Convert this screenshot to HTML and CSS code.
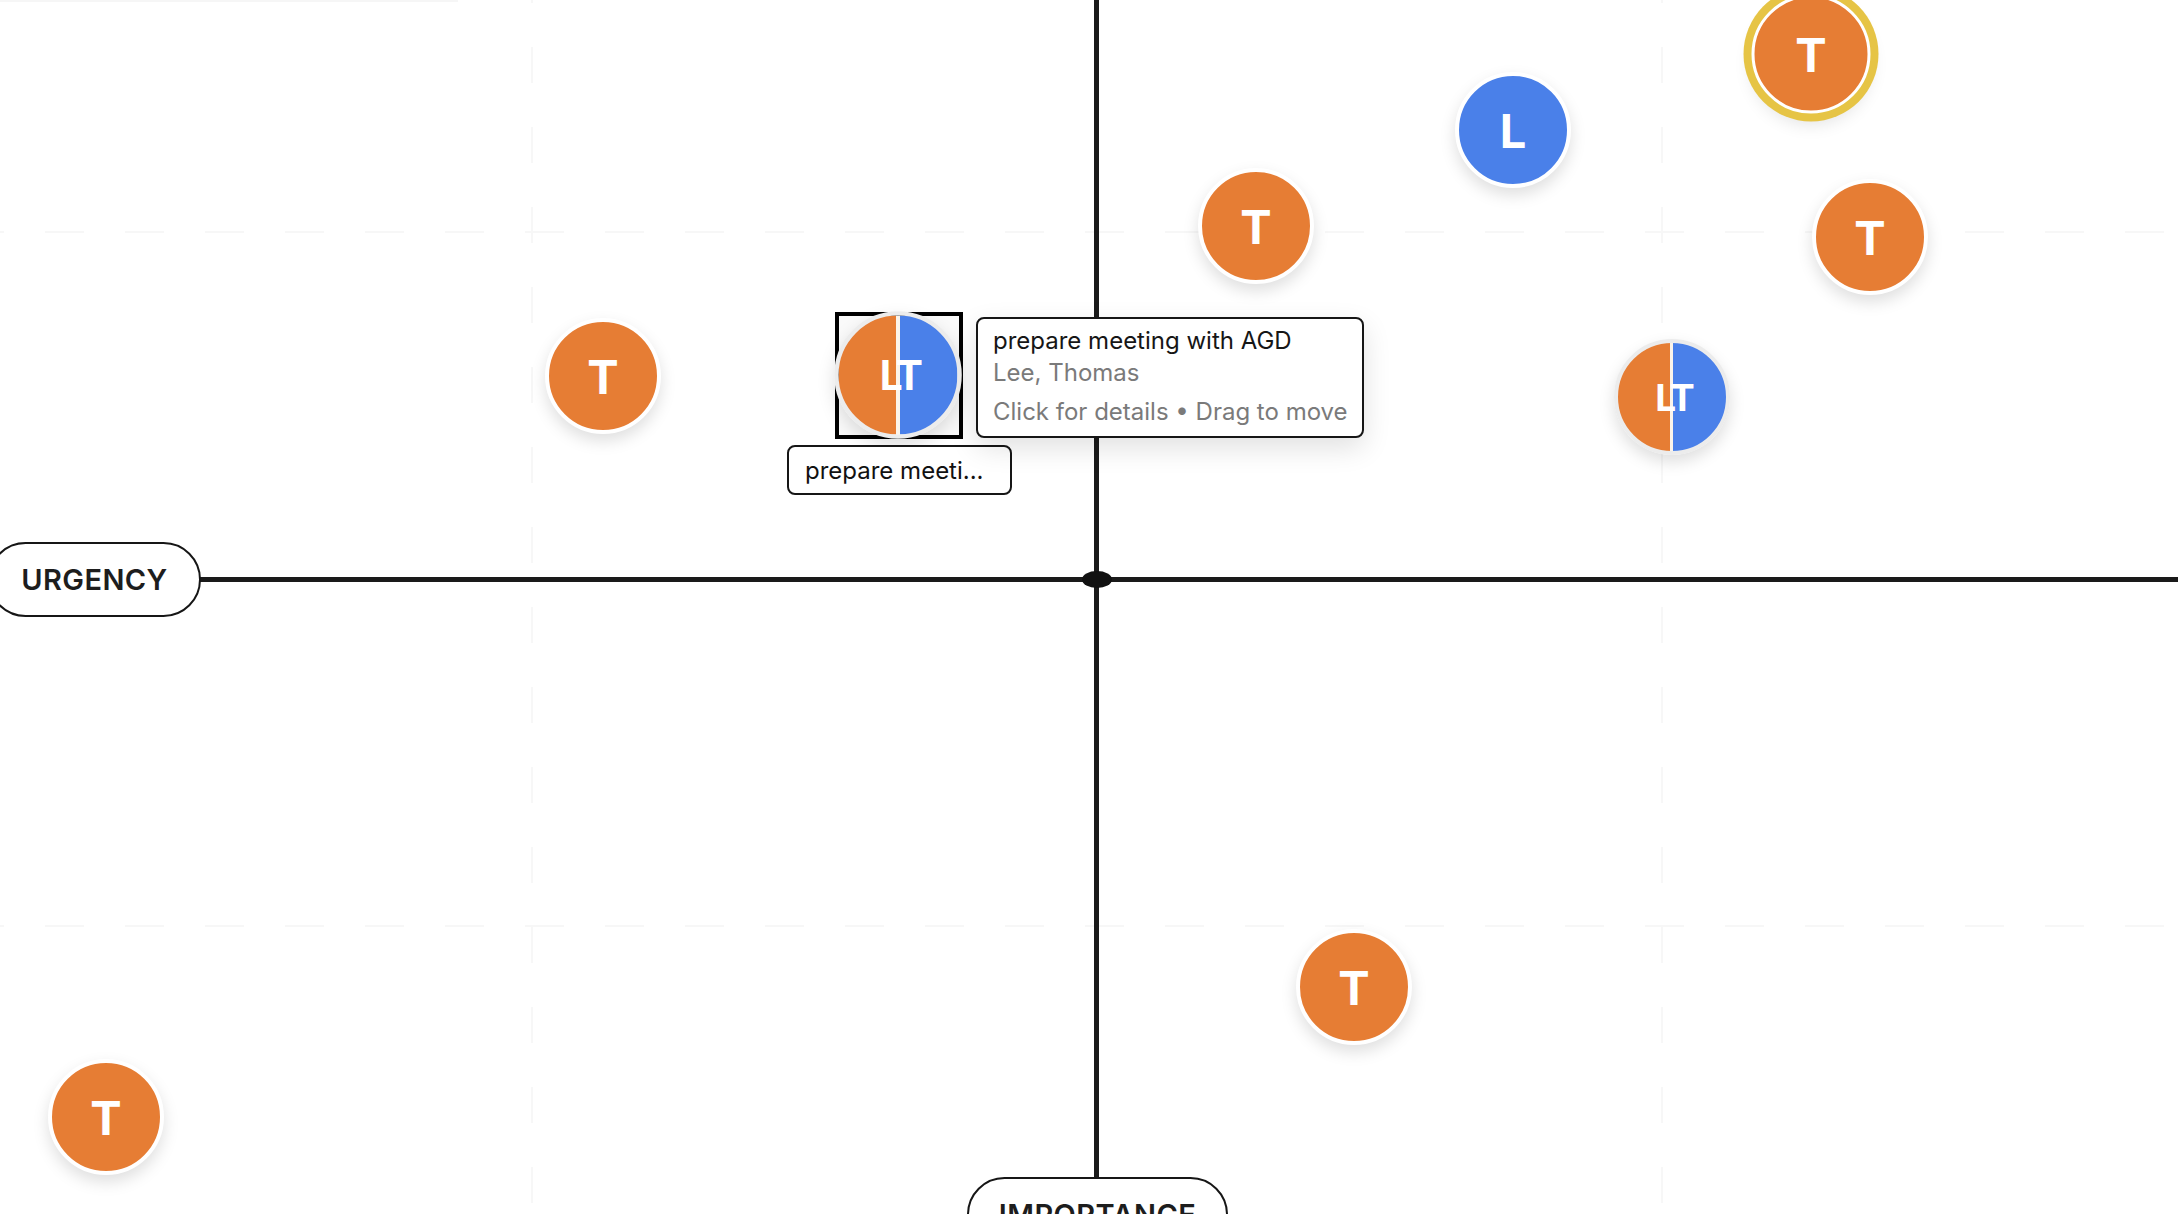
FILE: index.html
```html
<!DOCTYPE html>
<html lang="en">
<head>
<meta charset="utf-8">
<title>Urgency / Importance matrix</title>
<link rel="stylesheet" href="styles.css">
</head>
<body>
<div class="board">
  <div class="top-fade"></div>
  <div class="grid-v" style="left:531px"></div>
  <div class="grid-v" style="left:1661px"></div>
  <div class="grid-h" style="top:231px"></div>
  <div class="grid-h" style="top:925px"></div>

  <div class="axis-x"></div>
  <div class="axis-y"></div>
  <div class="origin"></div>

  <div class="pill pill-urgency">URGENCY</div>
  <div class="pill pill-importance">IMPORTANCE</div>

  <div class="node orange" style="left:603px;top:376px"><span>T</span></div>
  <div class="node orange" style="left:1256px;top:226px"><span>T</span></div>
  <div class="node blue" style="left:1513px;top:130px"><span>L</span></div>
  <div class="node orange starred" style="left:1811px;top:54px"><span>T</span></div>
  <div class="node orange" style="left:1870px;top:237px"><span>T</span></div>
  <div class="node split" style="left:1672px;top:397px"><span>LT</span></div>
  <div class="node orange" style="left:1354px;top:987px"><span>T</span></div>
  <div class="node orange" style="left:106px;top:1117px"><span>T</span></div>

  <div class="select-box"></div>
  <div class="node split selected" style="left:898px;top:375px"><span>LT</span></div>
  <div class="node-label">prepare meeti...</div>

  <div class="tooltip">
    <div class="tip-title">prepare meeting with AGD</div>
    <div class="tip-people">Lee, Thomas</div>
    <div class="tip-hint">Click for details • Drag to move</div>
  </div>
</div>
</body>
</html>
```

FILE: styles.css
```css
html, body {
  margin: 0;
  padding: 0;
  background: #ffffff;
  overflow: hidden;
}

body {
  font-family: Inter, "Noto Sans", "Liberation Sans", sans-serif;
  color: #1a1a1a;
}

.board {
  position: relative;
  width: 2178px;
  height: 1214px;
  overflow: hidden;
  background: #ffffff;
}

.top-fade {
  position: absolute;
  left: 0;
  top: 0;
  width: 458px;
  height: 2px;
  background: #f6f6f6;
}

.grid-v {
  position: absolute;
  top: 0;
  width: 2px;
  height: 100%;
  background: repeating-linear-gradient(to bottom,
    #f7f7f7 0 3px, transparent 3px 47px, #f7f7f7 47px 80px);
}

.grid-h {
  position: absolute;
  left: 0;
  width: 100%;
  height: 2px;
  background: repeating-linear-gradient(to right,
    #f7f7f7 0 4px, transparent 4px 45px, #f7f7f7 45px 80px);
}

.axis-x {
  position: absolute;
  left: 190px;
  right: 0;
  top: 577px;
  height: 5px;
  background: #1a1a1a;
}

.axis-y {
  position: absolute;
  left: 1094px;
  top: 0;
  width: 5px;
  height: 1180px;
  background: #1a1a1a;
}

.origin {
  position: absolute;
  left: 1082px;
  top: 571px;
  width: 30px;
  height: 17px;
  border-radius: 50%;
  background: #111111;
}

.pill {
  position: absolute;
  box-sizing: border-box;
  height: 75px;
  border: 2px solid #161616;
  border-radius: 38px;
  background: #ffffff;
  display: flex;
  align-items: center;
  justify-content: center;
  font-size: 29px;
  font-weight: 600;
  letter-spacing: 0.4px;
  color: #1d1d1d;
}

.pill-urgency {
  left: -12px;
  top: 542px;
  width: 213px;
}

.pill-importance {
  left: 967px;
  top: 1177px;
  width: 261px;
}

.node {
  position: absolute;
  box-sizing: border-box;
  width: 116px;
  height: 116px;
  transform: translate(-50%, -50%);
  border-radius: 50%;
  border: 4px solid #ffffff;
  box-shadow: 0 7px 16px rgba(0, 0, 0, 0.13);
  display: flex;
  align-items: center;
  justify-content: center;
  color: #ffffff;
  font-weight: 700;
  font-size: 47px;
  line-height: 1;
}

.node span {
  display: block;
}

.orange {
  background: #e67d34;
}

.blue {
  background: #4a80e9;
}

.split {
  border-color: #ececec;
  background: linear-gradient(to right,
    #e67d34 0 calc(50% - 1.5px),
    #fbf4ea calc(50% - 1.5px) calc(50% + 1.5px),
    #4a80e9 calc(50% + 1.5px) 100%);
  font-size: 37px;
  letter-spacing: -3px;
}

.split span {
  margin-right: -3px;
}

.starred {
  width: 119px;
  height: 119px;
  border-width: 3px;
  box-shadow: 0 0 0 8px #e6c445, 0 10px 18px rgba(0, 0, 0, 0.12);
}

.selected {
  transform: translate(-50%, -50%) scale(1.1);
}

.select-box {
  position: absolute;
  box-sizing: border-box;
  left: 835px;
  top: 312px;
  width: 128px;
  height: 127px;
  border: 4px solid #000000;
  background: #fafafa;
}

.node-label {
  position: absolute;
  box-sizing: border-box;
  left: 787px;
  top: 445px;
  width: 225px;
  height: 50px;
  padding: 0 16px;
  border: 2px solid #161616;
  border-radius: 8px;
  background: #ffffff;
  display: flex;
  align-items: center;
  font-size: 24px;
  color: #111111;
  white-space: nowrap;
}

.tooltip {
  position: absolute;
  box-sizing: border-box;
  left: 976px;
  top: 317px;
  width: 388px;
  height: 121px;
  padding: 6px 15px 8px;
  border: 2px solid #161616;
  border-radius: 8px;
  background: #ffffff;
  box-shadow: 0 10px 28px rgba(0, 0, 0, 0.12);
  font-size: 24px;
  line-height: 32px;
  white-space: nowrap;
}

.tip-title {
  color: #161616;
}

.tip-people {
  color: #7a7a7a;
}

.tip-hint {
  margin-top: 7px;
  color: #7a7a7a;
}
```
